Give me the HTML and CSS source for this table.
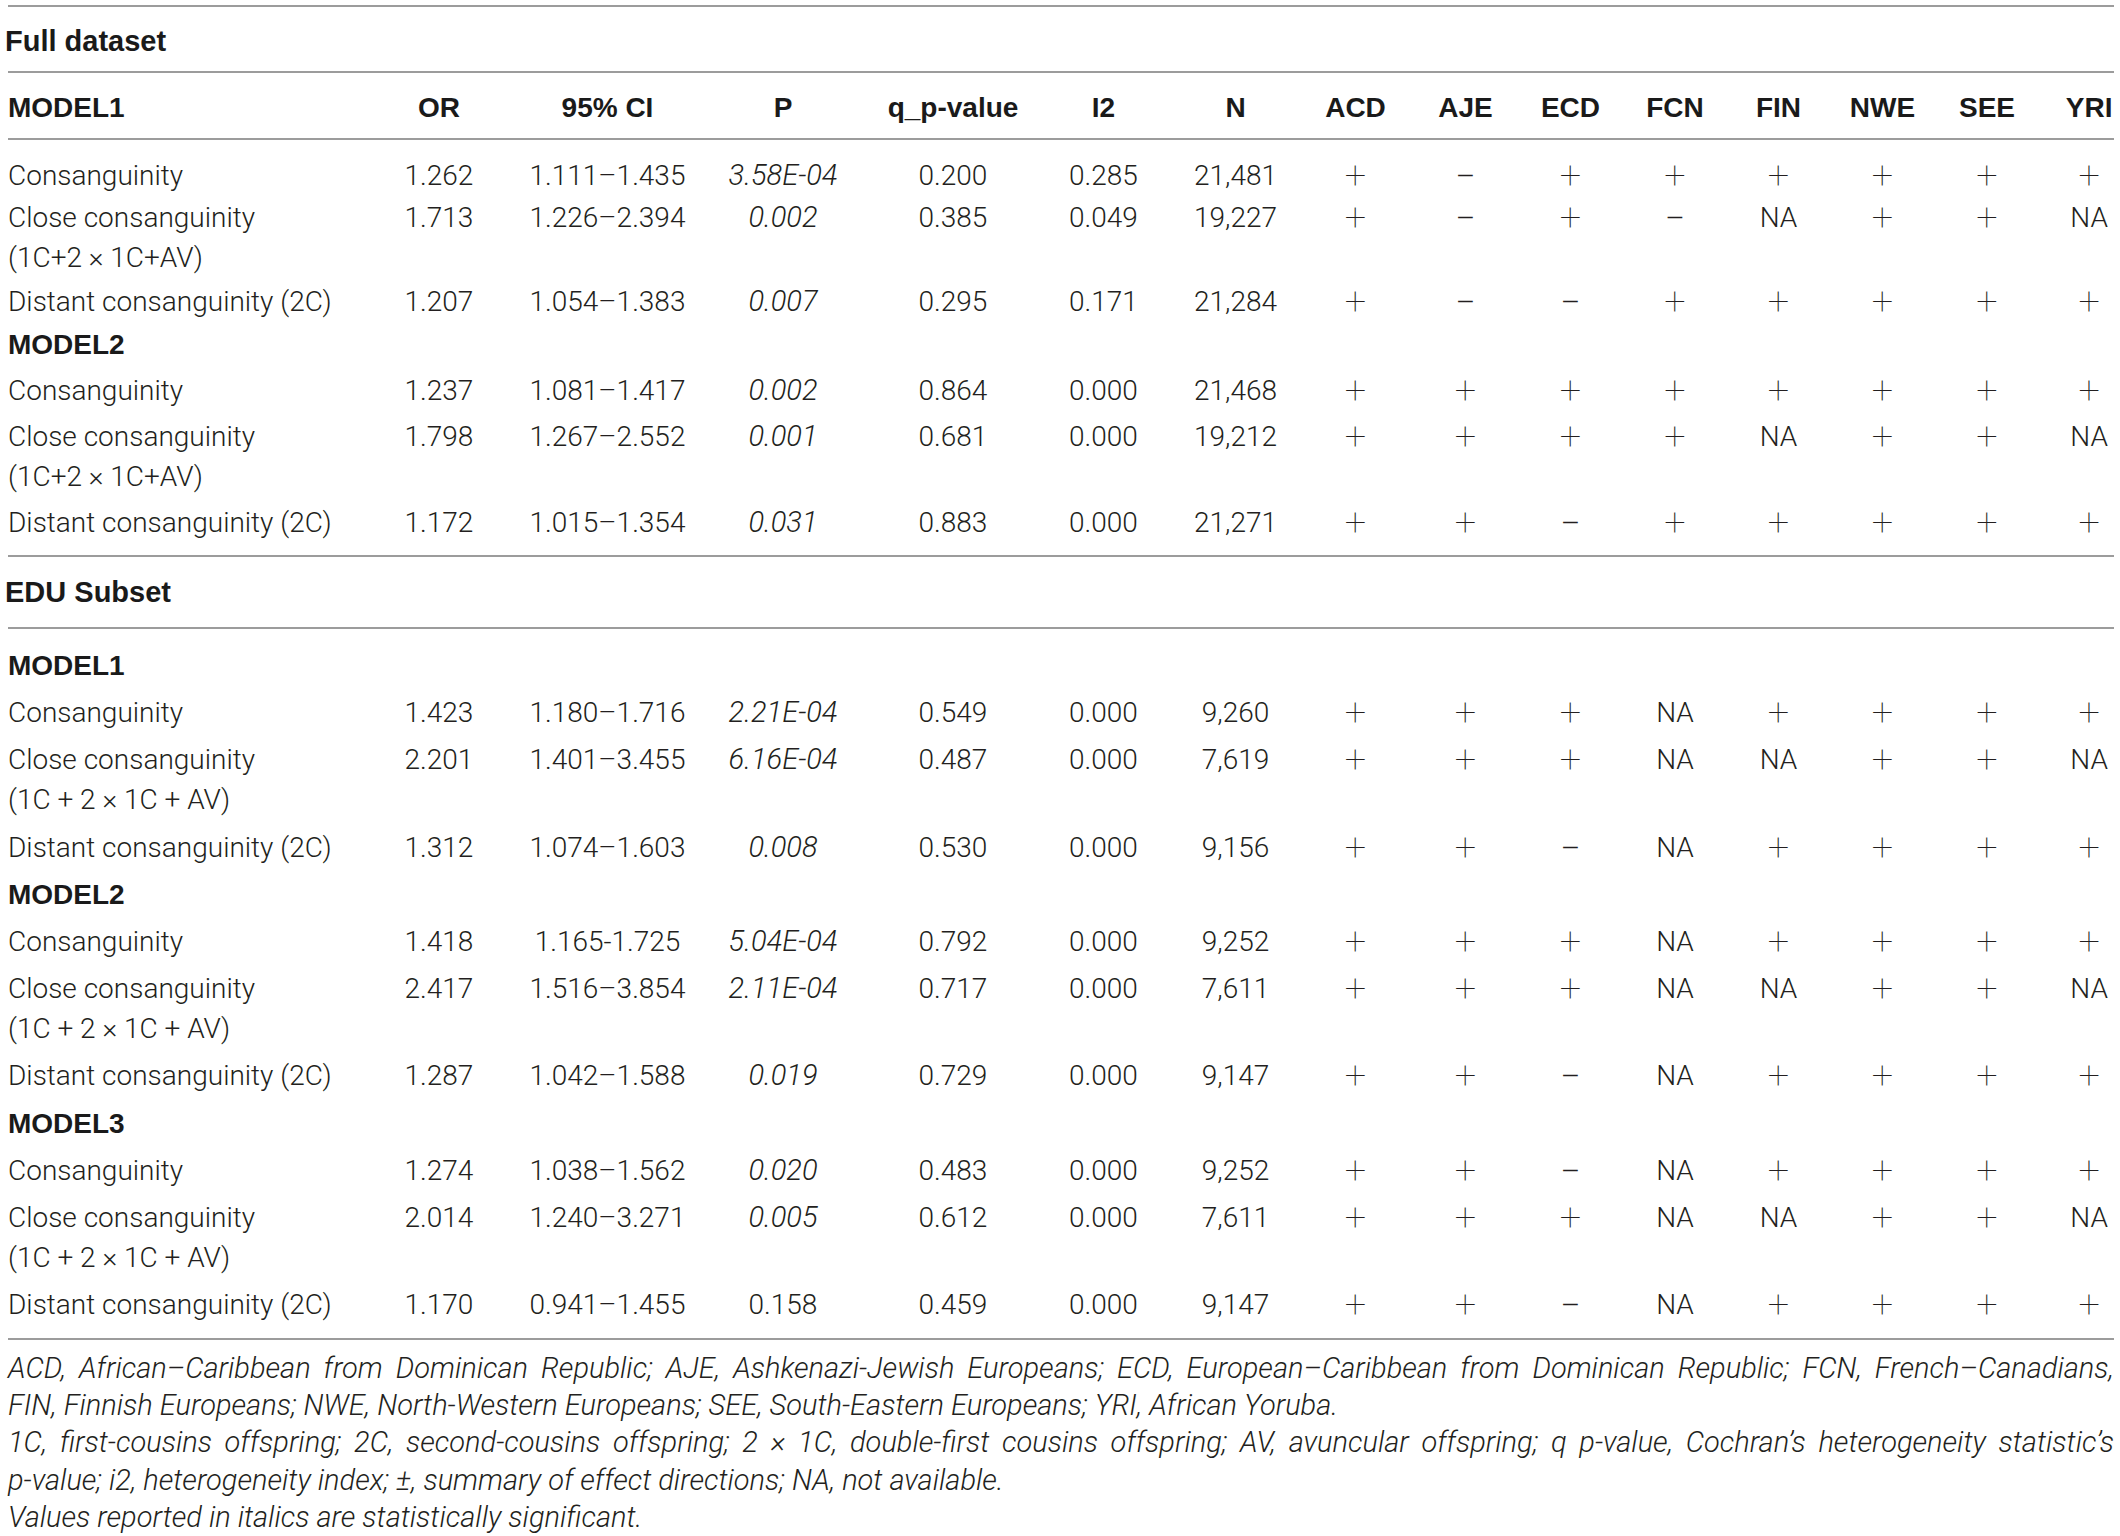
FILE: index.html
```html
<!DOCTYPE html>
<html lang="en">
<head>
<meta charset="utf-8">
<title>Table</title>
<link rel="stylesheet" href="styles.css">
</head>
<body>
<table class="data">
  <colgroup>
    <col class="c-lbl"><col class="c-or"><col class="c-ci"><col class="c-p"><col class="c-q"><col class="c-i2"><col class="c-n">
    <col class="c-acd"><col class="c-aje"><col class="c-ecd"><col class="c-fcn"><col class="c-fin"><col class="c-nwe"><col class="c-see"><col class="c-yri">
  </colgroup>
  <tbody>
    <tr class="sec sec-full"><td colspan="15" class="lbl">Full dataset</td></tr>
    <tr class="head">
      <th class="lbl">MODEL1</th><th>OR</th><th>95% CI</th><th>P</th><th>q_p-value</th><th>I2</th><th>N</th>
      <th>ACD</th><th>AJE</th><th>ECD</th><th>FCN</th><th>FIN</th><th>NWE</th><th>SEE</th><th class="last">YRI</th>
    </tr>
    <tr class="tight first-full">
      <td class="lbl">Consanguinity</td><td>1.262</td><td>1.111–1.435</td><td><i>3.58E-04</i></td><td>0.200</td><td>0.285</td><td>21,481</td>
      <td><span class="sg">+</span></td><td><span class="mn">–</span></td><td><span class="sg">+</span></td><td><span class="sg">+</span></td><td><span class="sg">+</span></td><td><span class="sg">+</span></td><td><span class="sg">+</span></td><td class="last"><span class="sg">+</span></td>
    </tr>
    <tr class="tight">
      <td class="lbl">Close consanguinity<br>(1C+2 × 1C+AV)</td><td>1.713</td><td>1.226–2.394</td><td><i>0.002</i></td><td>0.385</td><td>0.049</td><td>19,227</td>
      <td><span class="sg">+</span></td><td><span class="mn">–</span></td><td><span class="sg">+</span></td><td><span class="mn">–</span></td><td>NA</td><td><span class="sg">+</span></td><td><span class="sg">+</span></td><td class="last">NA</td>
    </tr>
    <tr class="tight low">
      <td class="lbl">Distant consanguinity (2C)</td><td>1.207</td><td>1.054–1.383</td><td><i>0.007</i></td><td>0.295</td><td>0.171</td><td>21,284</td>
      <td><span class="sg">+</span></td><td><span class="mn">–</span></td><td><span class="mn">–</span></td><td><span class="sg">+</span></td><td><span class="sg">+</span></td><td><span class="sg">+</span></td><td><span class="sg">+</span></td><td class="last"><span class="sg">+</span></td>
    </tr>
    <tr class="mid">
      <td class="lbl model" colspan="15">MODEL2</td>
    </tr>
    <tr class="mid">
      <td class="lbl">Consanguinity</td><td>1.237</td><td>1.081–1.417</td><td><i>0.002</i></td><td>0.864</td><td>0.000</td><td>21,468</td>
      <td><span class="sg">+</span></td><td><span class="sg">+</span></td><td><span class="sg">+</span></td><td><span class="sg">+</span></td><td><span class="sg">+</span></td><td><span class="sg">+</span></td><td><span class="sg">+</span></td><td class="last"><span class="sg">+</span></td>
    </tr>
    <tr class="mid">
      <td class="lbl">Close consanguinity<br>(1C+2 × 1C+AV)</td><td>1.798</td><td>1.267–2.552</td><td><i>0.001</i></td><td>0.681</td><td>0.000</td><td>19,212</td>
      <td><span class="sg">+</span></td><td><span class="sg">+</span></td><td><span class="sg">+</span></td><td><span class="sg">+</span></td><td>NA</td><td><span class="sg">+</span></td><td><span class="sg">+</span></td><td class="last">NA</td>
    </tr>
    <tr class="mid end-full">
      <td class="lbl">Distant consanguinity (2C)</td><td>1.172</td><td>1.015–1.354</td><td><i>0.031</i></td><td>0.883</td><td>0.000</td><td>21,271</td>
      <td><span class="sg">+</span></td><td><span class="sg">+</span></td><td><span class="mn">–</span></td><td><span class="sg">+</span></td><td><span class="sg">+</span></td><td><span class="sg">+</span></td><td><span class="sg">+</span></td><td class="last"><span class="sg">+</span></td>
    </tr>

    <tr class="sec sec-edu"><td colspan="15" class="lbl">EDU Subset</td></tr>
    <tr class="first-edu">
      <td class="lbl model" colspan="15">MODEL1</td>
    </tr>
    <tr>
      <td class="lbl">Consanguinity</td><td>1.423</td><td>1.180–1.716</td><td><i>2.21E-04</i></td><td>0.549</td><td>0.000</td><td>9,260</td>
      <td><span class="sg">+</span></td><td><span class="sg">+</span></td><td><span class="sg">+</span></td><td>NA</td><td><span class="sg">+</span></td><td><span class="sg">+</span></td><td><span class="sg">+</span></td><td class="last"><span class="sg">+</span></td>
    </tr>
    <tr>
      <td class="lbl">Close consanguinity<br>(1C + 2 × 1C + AV)</td><td>2.201</td><td>1.401–3.455</td><td><i>6.16E-04</i></td><td>0.487</td><td>0.000</td><td>7,619</td>
      <td><span class="sg">+</span></td><td><span class="sg">+</span></td><td><span class="sg">+</span></td><td>NA</td><td>NA</td><td><span class="sg">+</span></td><td><span class="sg">+</span></td><td class="last">NA</td>
    </tr>
    <tr>
      <td class="lbl">Distant consanguinity (2C)</td><td>1.312</td><td>1.074–1.603</td><td><i>0.008</i></td><td>0.530</td><td>0.000</td><td>9,156</td>
      <td><span class="sg">+</span></td><td><span class="sg">+</span></td><td><span class="mn">–</span></td><td>NA</td><td><span class="sg">+</span></td><td><span class="sg">+</span></td><td><span class="sg">+</span></td><td class="last"><span class="sg">+</span></td>
    </tr>
    <tr>
      <td class="lbl model" colspan="15">MODEL2</td>
    </tr>
    <tr>
      <td class="lbl">Consanguinity</td><td>1.418</td><td>1.165-1.725</td><td><i>5.04E-04</i></td><td>0.792</td><td>0.000</td><td>9,252</td>
      <td><span class="sg">+</span></td><td><span class="sg">+</span></td><td><span class="sg">+</span></td><td>NA</td><td><span class="sg">+</span></td><td><span class="sg">+</span></td><td><span class="sg">+</span></td><td class="last"><span class="sg">+</span></td>
    </tr>
    <tr>
      <td class="lbl">Close consanguinity<br>(1C + 2 × 1C + AV)</td><td>2.417</td><td>1.516–3.854</td><td><i>2.11E-04</i></td><td>0.717</td><td>0.000</td><td>7,611</td>
      <td><span class="sg">+</span></td><td><span class="sg">+</span></td><td><span class="sg">+</span></td><td>NA</td><td>NA</td><td><span class="sg">+</span></td><td><span class="sg">+</span></td><td class="last">NA</td>
    </tr>
    <tr>
      <td class="lbl">Distant consanguinity (2C)</td><td>1.287</td><td>1.042–1.588</td><td><i>0.019</i></td><td>0.729</td><td>0.000</td><td>9,147</td>
      <td><span class="sg">+</span></td><td><span class="sg">+</span></td><td><span class="mn">–</span></td><td>NA</td><td><span class="sg">+</span></td><td><span class="sg">+</span></td><td><span class="sg">+</span></td><td class="last"><span class="sg">+</span></td>
    </tr>
    <tr>
      <td class="lbl model" colspan="15">MODEL3</td>
    </tr>
    <tr>
      <td class="lbl">Consanguinity</td><td>1.274</td><td>1.038–1.562</td><td><i>0.020</i></td><td>0.483</td><td>0.000</td><td>9,252</td>
      <td><span class="sg">+</span></td><td><span class="sg">+</span></td><td><span class="mn">–</span></td><td>NA</td><td><span class="sg">+</span></td><td><span class="sg">+</span></td><td><span class="sg">+</span></td><td class="last"><span class="sg">+</span></td>
    </tr>
    <tr>
      <td class="lbl">Close consanguinity<br>(1C + 2 × 1C + AV)</td><td>2.014</td><td>1.240–3.271</td><td><i>0.005</i></td><td>0.612</td><td>0.000</td><td>7,611</td>
      <td><span class="sg">+</span></td><td><span class="sg">+</span></td><td><span class="sg">+</span></td><td>NA</td><td>NA</td><td><span class="sg">+</span></td><td><span class="sg">+</span></td><td class="last">NA</td>
    </tr>
    <tr class="end-edu">
      <td class="lbl">Distant consanguinity (2C)</td><td>1.170</td><td>0.941–1.455</td><td>0.158</td><td>0.459</td><td>0.000</td><td>9,147</td>
      <td><span class="sg">+</span></td><td><span class="sg">+</span></td><td><span class="mn">–</span></td><td>NA</td><td><span class="sg">+</span></td><td><span class="sg">+</span></td><td><span class="sg">+</span></td><td class="last"><span class="sg">+</span></td>
    </tr>
  </tbody>
</table>
<div class="notes">
  <p><span class="jl">ACD, African–Caribbean from Dominican Republic; AJE, Ashkenazi-Jewish Europeans; ECD, European–Caribbean from Dominican Republic; FCN, French–Canadians,</span> FIN, Finnish Europeans; NWE, North-Western Europeans; SEE, South-Eastern Europeans; YRI, African Yoruba.</p>
  <p><span class="jl">1C, first-cousins offspring; 2C, second-cousins offspring; 2 × 1C, double-first cousins offspring; AV, avuncular offspring; q p-value, Cochran’s heterogeneity statistic’s</span> p-value; i2, heterogeneity index; ±, summary of effect directions; NA, not available.</p>
  <p>Values reported in italics are statistically significant.</p>
</div>
</body>
</html>
```

FILE: styles.css
```css
html, body {
  margin: 0;
  background: #ffffff;
}

body {
  padding: 5px 0 0 8px;
  font-family: Roboto, "Liberation Sans", Arial, sans-serif;
  font-weight: 300;
  font-size: 28px;
  color: #231f20;
}

.data {
  width: 2106px;
  table-layout: fixed;
  border-collapse: separate;
  border-spacing: 0;
}

.c-lbl { width: 349px; }
.c-or { width: 164px; }
.c-ci { width: 173px; }
.c-p { width: 178px; }
.c-q { width: 162px; }
.c-i2 { width: 139px; }
.c-n { width: 125px; }
.c-acd { width: 115px; }
.c-aje { width: 105px; }
.c-ecd { width: 105px; }
.c-fcn { width: 104px; }
.c-fin { width: 103px; }
.c-nwe { width: 105px; }
.c-see { width: 104px; }
.c-yri { width: 75px; }

.data td,
.data th {
  padding: 3.6px 0;
  line-height: 40px;
  text-align: center;
  vertical-align: top;
  white-space: nowrap;
  font-weight: 300;
}

.data .lbl {
  text-align: left;
}

.data .last {
  padding-left: 25px;
}

.data i {
  font-style: italic;
  font-size: 29px;
  line-height: 1;
}

.sg {
  font-size: 38px;
  line-height: 0;
  font-weight: 100;
  vertical-align: -3px;
}

.mn {
  font-size: 30px;
  line-height: 0;
  font-weight: 300;
  vertical-align: -1px;
}

.sec td {
  font-family: "Liberation Sans", Arial, sans-serif;
  font-weight: 700;
  font-size: 29px;
  text-indent: -3px;
  color: #1a1a1a;
}

.sec-full td {
  padding: 14px 0 10px;
  border-top: 2px solid #9c9c9c;
  border-bottom: 2px solid #9c9c9c;
}

.sec-edu td {
  padding: 15px 0 15px;
  border-bottom: 2px solid #9c9c9c;
}

.head th {
  padding: 15px 0 10px;
  font-family: "Liberation Sans", Arial, sans-serif;
  font-weight: 700;
  color: #1a1a1a;
  border-bottom: 2px solid #9c9c9c;
}

.data .model {
  font-family: "Liberation Sans", Arial, sans-serif;
  font-weight: 700;
  color: #1a1a1a;
}

.tight td {
  padding-top: 1px;
  padding-bottom: 1px;
}

.tight.low td {
  padding-top: 3px;
  padding-bottom: 0;
}

.first-full td {
  padding-top: 16px;
}

.mid td {
  padding-top: 3px;
  padding-bottom: 3px;
}

.end-full td {
  padding-bottom: 12px;
  border-bottom: 2px solid #9c9c9c;
}

.first-edu td {
  padding-top: 17px;
}

.end-edu td {
  padding-bottom: 13px;
  border-bottom: 2px solid #9c9c9c;
}

.notes {
  width: 2106px;
  margin-top: 10px;
  font-style: italic;
  font-size: 29px;
  line-height: 37.2px;
}

.notes p {
  margin: 0;
  text-align: justify;
}

.notes .jl {
  display: block;
  text-align: justify;
  text-align-last: justify;
}
```
